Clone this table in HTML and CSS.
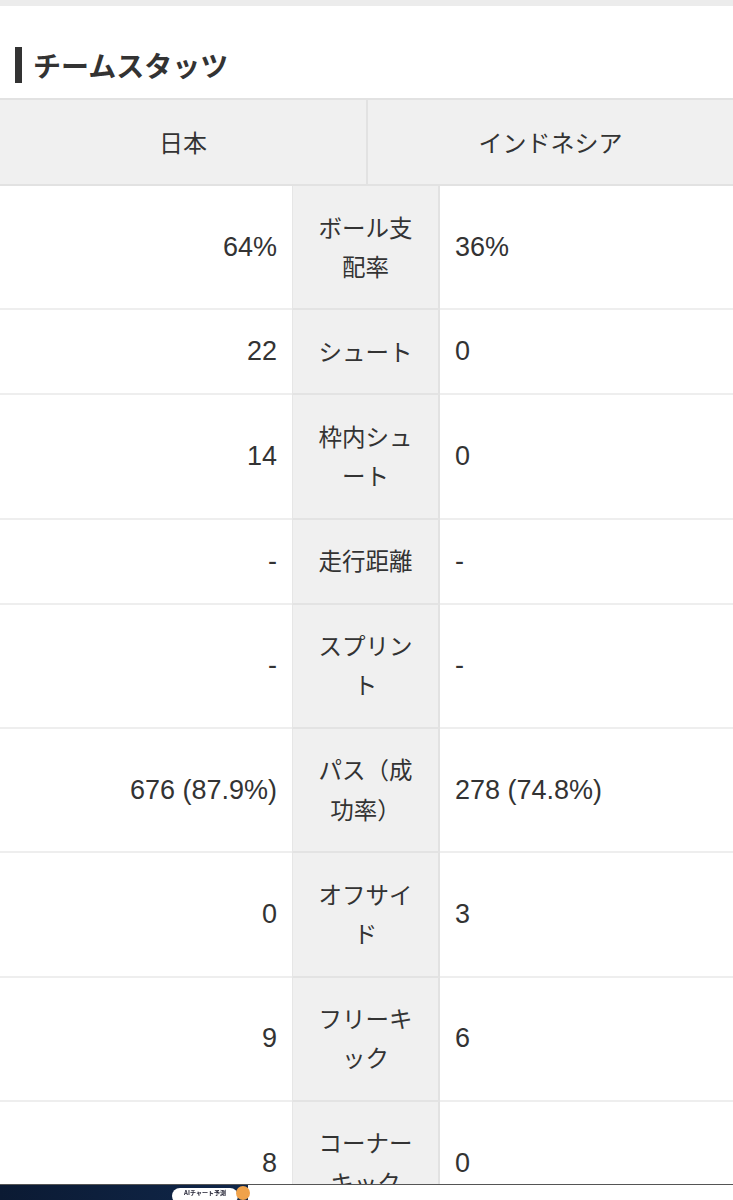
FILE: index.html
```html
<!DOCTYPE html>
<html lang="ja">
<head>
<meta charset="utf-8">
<title>チームスタッツ</title>
<link rel="stylesheet" href="styles.css">
</head>
<body>
<div class="topstrip"></div>
<section class="stats">
  <h2 class="title">チームスタッツ</h2>
  <div class="teams">
    <div class="team">日本</div>
    <div class="team">インドネシア</div>
  </div>
  <div class="rows">
    <div class="row"><div class="val home">64%</div><div class="label">ボール支配率</div><div class="val away">36%</div></div>
    <div class="row"><div class="val home">22</div><div class="label">シュート</div><div class="val away">0</div></div>
    <div class="row"><div class="val home">14</div><div class="label">枠内シュート</div><div class="val away">0</div></div>
    <div class="row"><div class="val home">-</div><div class="label">走行距離</div><div class="val away">-</div></div>
    <div class="row"><div class="val home">-</div><div class="label">スプリント</div><div class="val away">-</div></div>
    <div class="row"><div class="val home">676 (87.9%)</div><div class="label">パス（成功率）</div><div class="val away">278 (74.8%)</div></div>
    <div class="row"><div class="val home">0</div><div class="label">オフサイド</div><div class="val away">3</div></div>
    <div class="row"><div class="val home">9</div><div class="label">フリーキック</div><div class="val away">6</div></div>
    <div class="row"><div class="val home">8</div><div class="label">コーナーキック</div><div class="val away">0</div></div>
    <div class="row"><div class="val home">1</div><div class="label">ファウル</div><div class="val away">9</div></div>
  </div>
</section>
<div class="adbar">
  <div class="ad-dark"><span class="ad-pill">AIチャート予測</span><span class="ad-dot"></span></div>
</div>
</body>
</html>
```
FILE: styles.css
```css
html, body {
  margin: 0;
  padding: 0;
  background: #fff;
  color: #333;
  font-family: "Noto Sans CJK JP", "Noto Sans", sans-serif;
}
.topstrip {
  height: 6px;
  background: #ececec;
}
.stats {
  padding-top: 41px;
}
.title {
  margin: 0 0 15px 15px;
  padding-left: 11px;
  border-left: 7px solid #333;
  font-size: 28px;
  font-weight: 700;
  line-height: 36px;
  height: 36px;
}
.teams {
  display: grid;
  grid-template-columns: 366px 1fr;
  border-top: 2px solid #e2e2e2;
  border-bottom: 2px solid #e2e2e2;
  background: #f0f0f0;
}
.team {
  text-align: center;
  font-size: 24px;
  line-height: 39px;
  padding: 22px 0 23px;
}
.team + .team {
  border-left: 2px solid #e2e2e2;
}
.rows {
  display: flex;
  flex-direction: column;
}
.row {
  display: grid;
  grid-template-columns: 292px 148px 1fr;
}
.label {
  background: #f0f0f0;
  border-left: 1px solid #e6e6e6;
  border-right: 2px solid #e2e2e2;
  border-bottom: 2px solid #e3e3e3;
  text-align: center;
  font-size: 23.5px;
  line-height: 39.33px;
  padding: 21.5px 24px 22.17px;
}
.val {
  display: flex;
  align-items: center;
  border-bottom: 2px solid #eeeeee;
  font-family: "Liberation Sans", "Noto Sans CJK JP", sans-serif;
  font-size: 27px;
}
.home {
  justify-content: flex-end;
  padding-right: 15px;
}
.away {
  padding-left: 15px;
}
.adbar {
  position: fixed;
  left: 0;
  right: 0;
  bottom: 0;
  height: 15px;
  background: #fff;
  border-top: 1px solid #555;
  display: flex;
}
.ad-dark {
  width: 248px;
  background: linear-gradient(90deg, #0b1a33, #10274a);
  position: relative;
}
.ad-pill {
  position: absolute;
  left: 172px;
  top: 3px;
  width: 66px;
  height: 16px;
  border-radius: 8px;
  background: #fff;
  color: #223;
  font-size: 6px;
  line-height: 10px;
  text-align: center;
  font-weight: 700;
}
.ad-dot {
  position: absolute;
  left: 236px;
  top: 1px;
  width: 14px;
  height: 14px;
  border-radius: 50%;
  background: #f0a24a;
}
```
